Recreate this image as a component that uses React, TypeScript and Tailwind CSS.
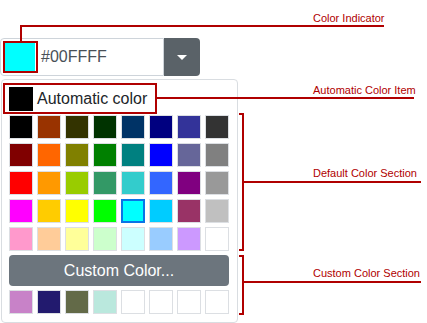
const defaultColors = [
  ['#000000', '#993300', '#333300', '#003300', '#003366', '#000080', '#333399', '#333333'],
  ['#800000', '#FF6600', '#808000', '#008000', '#008080', '#0000FF', '#666699', '#808080'],
  ['#FF0000', '#FF9900', '#99CC00', '#339966', '#33CCCC', '#3366FF', '#800080', '#999999'],
  ['#FF00FF', '#FFCC00', '#FFFF00', '#00FF00', '#00FFFF', '#00CCFF', '#993366', '#C0C0C0'],
  ['#FF99CC', '#FFCC99', '#FFFF99', '#CCFFCC', '#CCFFFF', '#99CCFF', '#CC99FF', '#FFFFFF'],
]

const customColors = ['#C882C8', '#221A6E', '#636A48', '#BAE8DD', '#FFFFFF', '#FFFFFF', '#FFFFFF', '#FFFFFF']

const selected = '#00FFFF'

const notes = [
  { text: 'Color Indicator', top: 12 },
  { text: 'Automatic Color Item', top: 84 },
  { text: 'Default Color Section', top: 167 },
  { text: 'Custom Color Section', top: 267 },
]

function Swatch({ color }: { color: string }) {
  const isSel = color === selected
  return (
    <div
      className={`w-6 h-6 box-border ${isSel ? 'border-2 border-[#0a74e6]' : 'border border-[#dcdfe3]'}`}
      style={{ backgroundColor: color }}
    />
  )
}

// leader lines + brackets of the annotated screenshot
function Callouts() {
  return (
    <svg className="absolute inset-0 pointer-events-none" width="427" height="323" fill="none" stroke="#b00000" strokeWidth="2">
      <rect x="4" y="42" width="33" height="30" />
      <path d="M21 42V26H384" />
      <rect x="4" y="84" width="152" height="29" />
      <path d="M156 98H414" />
      <path d="M239 114H243V250H239M243 182H421" />
      <path d="M239 256H243V314H239M243 282H421" />
    </svg>
  )
}

export default function App() {
  return (
    <div className="relative w-[427px] h-[323px] bg-white overflow-hidden font-['Liberation_Sans',Arial,sans-serif]">
      <div className="pt-[38px]">
        {/* input group */}
        <div className="flex w-[200px] h-[38px]">
          <div className="flex items-center flex-1 border border-[#ced4da] rounded-l-[4px] pl-[3px]">
            <div className="w-[31px] h-[30px] bg-[#00FFFF]" />
            <span className="ml-[6px] text-[16px] text-[#495057]">#00FFFF</span>
          </div>
          <button className="w-[36px] h-full bg-[#5a6268] rounded-r-[4px] flex items-center justify-center">
            <svg width="10" height="5" viewBox="0 0 10 5">
              <path d="M0 0h10L5 5z" fill="#fff" />
            </svg>
          </button>
        </div>

        {/* popup */}
        <div className="ml-[1px] mt-[3px] w-[237px] h-[244px] border border-[#d9dde1] rounded-[4px] pt-[7px] pl-[7px]">
          <div className="flex items-center h-6">
            <div className="w-6 h-6 bg-black" />
            <span className="ml-1 text-[16px] text-[#212529]">Automatic color</span>
          </div>
          <div className="mt-1 flex flex-col gap-1">
            {defaultColors.map((row, i) => (
              <div key={i} className="flex gap-1">
                {row.map((c, j) => (
                  <Swatch key={j} color={c} />
                ))}
              </div>
            ))}
          </div>
          <button className="mt-1 w-[220px] h-[31px] bg-[#6c757d] rounded-[4px] text-white text-[16px]">
            Custom Color...
          </button>
          <div className="mt-1 flex gap-1">
            {customColors.map((c, j) => (
              <Swatch key={j} color={c} />
            ))}
          </div>
        </div>
      </div>

      <Callouts />
      {notes.map((n) => (
        <span
          key={n.text}
          className="absolute left-[313px] text-[11px] leading-[13px] text-[#b00000] whitespace-nowrap"
          style={{ top: n.top }}
        >
          {n.text}
        </span>
      ))}
    </div>
  )
}
